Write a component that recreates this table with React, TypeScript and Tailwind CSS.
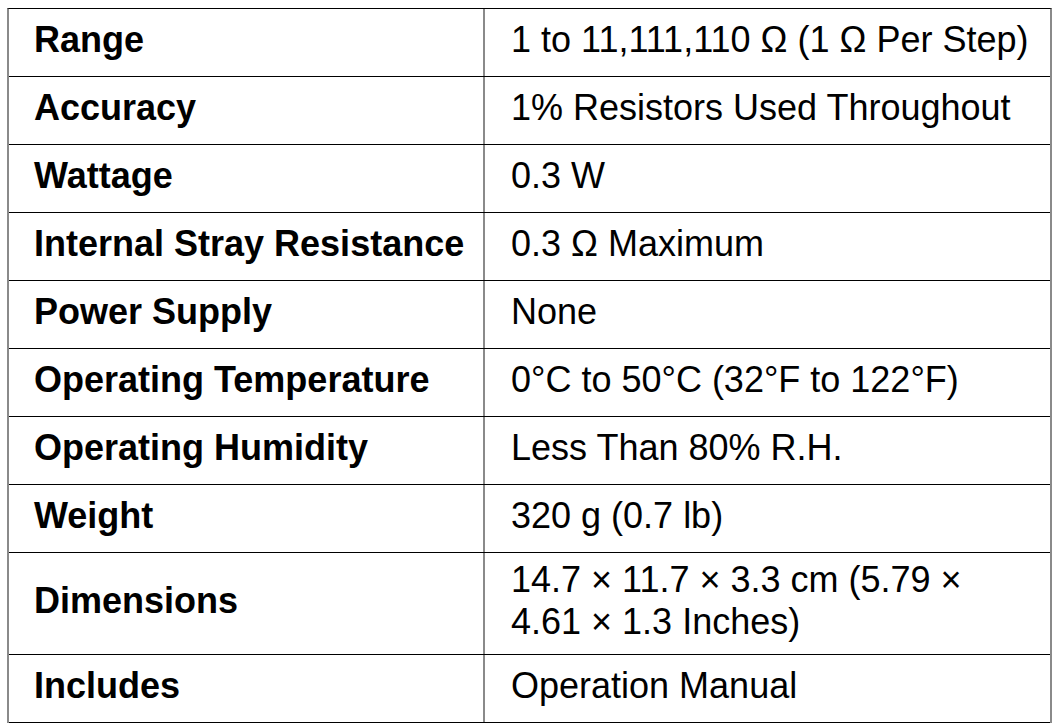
import React from 'react';

const specs: { label: string; value: string; tall?: boolean }[] = [
  { label: 'Range', value: '1 to 11,111,110 Ω (1 Ω Per Step)' },
  { label: 'Accuracy', value: '1% Resistors Used Throughout' },
  { label: 'Wattage', value: '0.3 W' },
  { label: 'Internal Stray Resistance', value: '0.3 Ω Maximum' },
  { label: 'Power Supply', value: 'None' },
  { label: 'Operating Temperature', value: '0°C to 50°C (32°F to 122°F)' },
  { label: 'Operating Humidity', value: 'Less Than 80% R.H.' },
  { label: 'Weight', value: '320 g (0.7 lb)' },
  { label: 'Dimensions', value: '14.7 × 11.7 × 3.3 cm (5.79 × 4.61 × 1.3 Inches)', tall: true },
  { label: 'Includes', value: 'Operation Manual' },
];

export default function App() {
  return (
    <div className="min-h-screen bg-white pt-[8px] pl-[7px] text-black [font-family:'Liberation_Sans',Arial,sans-serif]">
      {/* Spec table */}
      <div className="w-[1045px] border-x-2 border-x-[#8a8a8a] border-t border-t-black">
        {specs.map((row) => (
          <div
            key={row.label}
            className={`grid grid-cols-[476px_1fr] border-b border-black ${row.tall ? 'h-[102px]' : 'h-[68px]'}`}
          >
            <div className="flex items-center border-r-2 border-[#8a8a8a] pb-[5px] pl-[25px] text-[36px] font-bold leading-[42px]">
              {row.label}
            </div>
            <div className="flex items-center pb-[5px] pl-[26px] pr-[16px] text-[36px] leading-[42px]">
              {row.value}
            </div>
          </div>
        ))}
      </div>
    </div>
  );
}
